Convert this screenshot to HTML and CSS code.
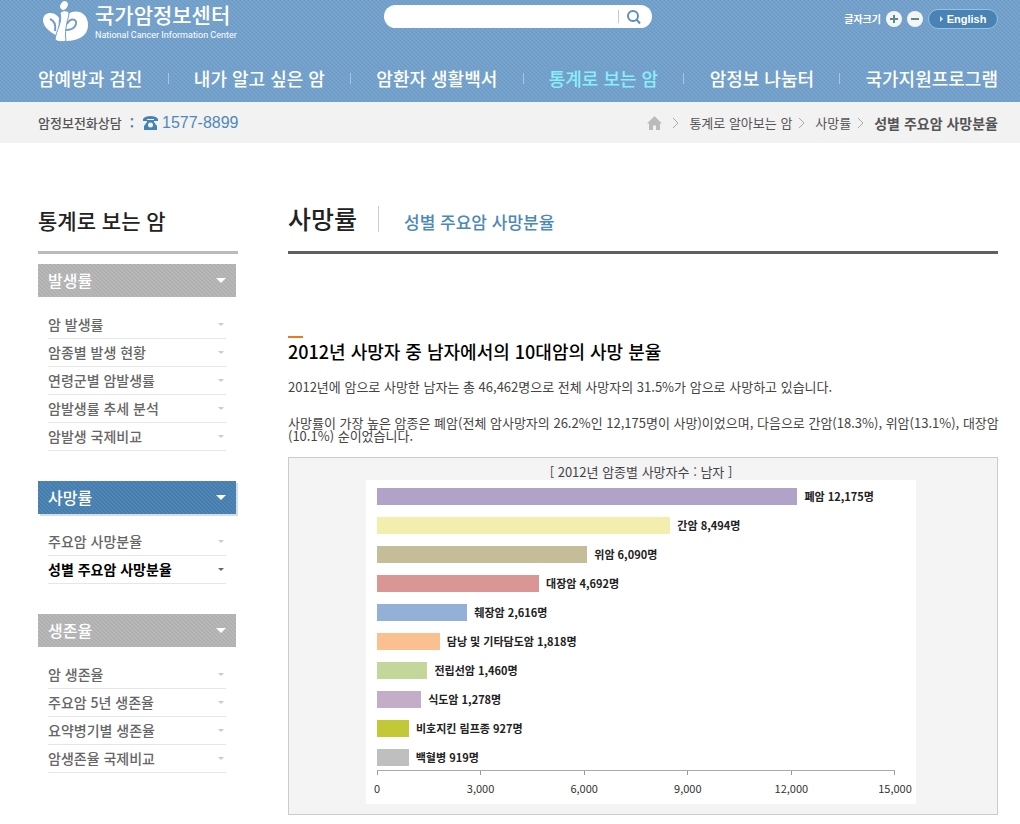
FILE: index.html
```html
<!DOCTYPE html>
<html lang="ko">
<head>
<meta charset="utf-8">
<meta name="viewport" content="width=device-width, initial-scale=1">
<title>국가암정보센터 - 성별 주요암 사망분율</title>
<link rel="stylesheet" href="styles.css">
</head>
<body>
<header class="header">
  <div class="topbar">
    <a class="logo" href="#">
      <svg class="logo-mark" viewBox="0 0 46 42" aria-hidden="true">
        <path d="M15 36C6 32 0 26 0 20C0 12 11 10 16 18Z"/>
        <path d="M24 15C32 8 45 12 45 25C45 36 35 41 22 41Z"/>
        <path class="logo-cut" d="M12 31C13 25 12 21 7 19"/>
        <path class="logo-cut" d="M24 24C27 18 34 18 33 24C32 28 28 30 23 30"/>
        <path class="logo-body" d="M17 13C19 10 25 10 26 13C26 18 21 27 23 41C20 42 15 42 12 40C13 30 20 22 17 13Z"/>
        <ellipse cx="21" cy="5.500" rx="3.500" ry="4.500" transform="rotate(30 21 5.500)"/>
      </svg>
      <span class="logo-text"><strong class="logo-ko">국가암정보센터</strong><span class="logo-en">National Cancer Information Center</span></span>
    </a>
    <form class="search" role="search">
      <input class="search-input" type="text" aria-label="검색어">
      <button class="search-button" type="button" aria-label="검색">
        <svg class="search-icon" viewBox="0 0 16 16" aria-hidden="true"><circle cx="7" cy="7" r="5"/><path d="M10.500 10.500L14 14.500"/></svg>
      </button>
    </form>
    <div class="tools">
      <span class="tools-label">글자크기</span>
      <button class="round" type="button" aria-label="글자 크게"><svg class="round-icon" viewBox="0 0 10 10" aria-hidden="true"><path d="M1 5H9M5 1V9"/></svg></button>
      <button class="round" type="button" aria-label="글자 작게"><svg class="round-icon" viewBox="0 0 10 10" aria-hidden="true"><path d="M1 5H9"/></svg></button>
      <a class="english" href="#"><svg class="english-arrow" viewBox="0 0 3 6" aria-hidden="true"><path d="M0 0L3 3L0 6Z"/></svg>English</a>
    </div>
  </div>
  <nav class="nav" aria-label="주 메뉴">
    <a class="nav-link" href="#">암예방과 검진</a><span class="nav-line"></span>
    <a class="nav-link" href="#">내가 알고 싶은 암</a><span class="nav-line"></span>
    <a class="nav-link" href="#">암환자 생활백서</a><span class="nav-line"></span>
    <a class="nav-link nav-current" href="#">통계로 보는 암</a><span class="nav-line"></span>
    <a class="nav-link" href="#">암정보 나눔터</a><span class="nav-line"></span>
    <a class="nav-link" href="#">국가지원프로그램</a>
  </nav>
</header>

<div class="subbar">
  <div class="phone">
    <span class="phone-label">암정보전화상담</span><span class="phone-colon">:</span>
    <svg class="phone-icon" viewBox="0 0 15 14" aria-hidden="true">
      <path d="M0 5V3C2 -1 13 -1 15 3V5H11V3H4V5Z"/>
      <path fill-rule="evenodd" d="M4 4H11V6L14 10V14H1V10L4 6ZM7.500 6.500A2.500 2.500 0 1 0 7.500 11.500A2.500 2.500 0 1 0 7.500 6.500Z"/>
    </svg>
    <span class="phone-number">1577-8899</span>
  </div>
  <nav class="crumbs" aria-label="현재 위치">
    <a class="crumb" href="#" aria-label="홈"><svg class="home" viewBox="0 0 15 14" aria-hidden="true"><path d="M7.500 0L15 7.500H13V14H9V9.500H6V14H2V7.500H0Z"/></svg></a>
    <svg class="chevron" viewBox="0 0 7 12" aria-hidden="true"><path d="M1 1L6 6L1 11"/></svg>
    <a class="crumb" href="#">통계로 알아보는 암</a>
    <svg class="chevron" viewBox="0 0 7 12" aria-hidden="true"><path d="M1 1L6 6L1 11"/></svg>
    <a class="crumb" href="#">사망률</a>
    <svg class="chevron" viewBox="0 0 7 12" aria-hidden="true"><path d="M1 1L6 6L1 11"/></svg>
    <strong class="crumb crumb-current">성별 주요암 사망분율</strong>
  </nav>
</div>

<div class="page">
  <aside class="side">
    <h2 class="side-title">통계로 보는 암</h2>
    <section class="group">
      <h3 class="group-head"><a class="group-link" href="#">발생률</a></h3>
      <ul class="menu">
        <li><a class="menu-link" href="#">암 발생률</a></li>
        <li><a class="menu-link" href="#">암종별 발생 현황</a></li>
        <li><a class="menu-link" href="#">연령군별 암발생률</a></li>
        <li><a class="menu-link" href="#">암발생률 추세 분석</a></li>
        <li><a class="menu-link" href="#">암발생 국제비교</a></li>
      </ul>
    </section>
    <section class="group">
      <h3 class="group-head group-open"><a class="group-link" href="#">사망률</a></h3>
      <ul class="menu">
        <li><a class="menu-link" href="#">주요암 사망분율</a></li>
        <li><a class="menu-link menu-current" href="#">성별 주요암 사망분율</a></li>
      </ul>
    </section>
    <section class="group">
      <h3 class="group-head"><a class="group-link" href="#">생존율</a></h3>
      <ul class="menu">
        <li><a class="menu-link" href="#">암 생존율</a></li>
        <li><a class="menu-link" href="#">주요암 5년 생존율</a></li>
        <li><a class="menu-link" href="#">요약병기별 생존율</a></li>
        <li><a class="menu-link" href="#">암생존율 국제비교</a></li>
      </ul>
    </section>
  </aside>

  <main class="main">
    <div class="heading">
      <h1 class="heading-title">사망률</h1>
      <span class="heading-line"></span>
      <span class="heading-sub">성별 주요암 사망분율</span>
    </div>
    <h2 class="section-title">2012년 사망자 중 남자에서의 10대암의 사망 분율</h2>
    <p class="text">2012년에 암으로 사망한 남자는 총 46,462명으로 전체 사망자의 31.5%가 암으로 사망하고 있습니다.</p>
    <p class="text">사망률이 가장 높은 암종은 폐암(전체 암사망자의 26.2%인 12,175명이 사망)이었으며, 다음으로 간암(18.3%), 위암(13.1%), 대장암(10.1%) 순이었습니다.</p>
    <figure class="figure">
      <figcaption class="caption">[ 2012년 암종별 사망자수 : 남자 ]</figcaption>
      <div class="chart">
        <ul class="bars">
          <li class="row"><span class="bar lung" style="width:81.17%"></span><span class="label">폐암 12,175명</span></li>
          <li class="row"><span class="bar liver" style="width:56.63%"></span><span class="label">간암 8,494명</span></li>
          <li class="row"><span class="bar stomach" style="width:40.6%"></span><span class="label">위암 6,090명</span></li>
          <li class="row"><span class="bar colon" style="width:31.28%"></span><span class="label">대장암 4,692명</span></li>
          <li class="row"><span class="bar pancreas" style="width:17.44%"></span><span class="label">췌장암 2,616명</span></li>
          <li class="row"><span class="bar gallbladder" style="width:12.12%"></span><span class="label">담낭 및 기타담도암 1,818명</span></li>
          <li class="row"><span class="bar prostate" style="width:9.73%"></span><span class="label">전립선암 1,460명</span></li>
          <li class="row"><span class="bar esophagus" style="width:8.52%"></span><span class="label">식도암 1,278명</span></li>
          <li class="row"><span class="bar lymphoma" style="width:6.18%"></span><span class="label">비호지킨 림프종 927명</span></li>
          <li class="row"><span class="bar leukemia" style="width:6.13%"></span><span class="label">백혈병 919명</span></li>
        </ul>
        <ol class="axis">
          <li class="tick">0</li><li class="tick">3,000</li><li class="tick">6,000</li><li class="tick">9,000</li><li class="tick">12,000</li><li class="tick">15,000</li>
        </ol>
      </div>
    </figure>
  </main>
</div>
</body>
</html>
```
FILE: styles.css
```css
* { box-sizing: border-box; }
body {
  margin: 0;
  background: #fff;
  color: #444;
  font: 13px/20px "Noto Sans CJK KR", sans-serif;
}
a { color: inherit; text-decoration: none; }
h1, h2, h3, p, ul, ol, figure { margin: 0; padding: 0; }
ul, ol { list-style: none; }
button, input { margin: 0; padding: 0; border: 0; font: inherit; }
svg { display: block; flex: none; }

/* Header */
.header {
  padding: 0 22px 14px 38px;
  background: #6f9dc9 linear-gradient(45deg, #78a4cc 25%, transparent 25% 50%, #78a4cc 50% 75%, transparent 75%) 0 0 / 4px 4px;
  color: #fff;
}
.topbar {
  display: grid;
  grid-template-columns: 1fr 268px 1fr;
  align-items: start;
  min-height: 48px;
}
.logo { display: flex; gap: 6px; padding-left: 5px; }
.logo-mark { width: 46px; height: 42px; fill: #fff; }
.logo-cut { fill: none; stroke: #709ec9; stroke-width: 2; }
.logo-body { stroke: #709ec9; stroke-width: 1; }
.logo-text { display: flex; flex-direction: column; }
.logo-ko { font-size: 21px; line-height: 29px; font-weight: 500; }
.logo-en { font: 9px/13px Roboto, Arial, sans-serif; white-space: nowrap; }
.search {
  display: flex;
  align-items: center;
  height: 23px;
  margin-top: 5px;
  border-radius: 12px;
  background: #fff;
}
.search-input { flex: 1; min-width: 0; height: 17px; margin-left: 14px; background: none; outline-offset: 2px; }
.search-button { width: 34px; height: 13px; padding-left: 7px; border-left: 1px solid #bcccd8; background: none; display: flex; align-items: center; }
.search-icon { width: 16px; height: 16px; fill: none; stroke: #5f90b8; stroke-width: 2; }
.tools { display: flex; justify-content: flex-end; align-items: center; gap: 5px; padding-top: 9px; }
.tools-label { font-size: 10px; font-weight: 700; }
.round {
  display: flex;
  align-items: center;
  justify-content: center;
  width: 16px;
  height: 16px;
  border-radius: 50%;
  background: #f4f6f6;
}
.round-icon { width: 10px; height: 10px; fill: none; stroke: #5a8a8c; stroke-width: 2; }
.english {
  display: flex;
  align-items: center;
  justify-content: center;
  gap: 4px;
  width: 70px;
  height: 20px;
  border: 1px solid #8fc4ea;
  border-radius: 10px;
  background: #4a83b3;
  font: bold 11px/18px "Liberation Sans", Arial, sans-serif;
}
.english-arrow { width: 3px; height: 6px; fill: #cdeaff; }
.nav { display: flex; justify-content: space-between; align-items: center; margin-top: 20px; }
.nav-link { font-size: 18px; line-height: 20px; font-weight: 500; white-space: nowrap; }
.nav-current { color: #8beefb; }
.nav-line { width: 1px; height: 11px; background: #a4c6e2; }

/* Contact and location bar */
.subbar {
  display: flex;
  justify-content: space-between;
  align-items: center;
  min-height: 41px;
  padding: 0 22px 0 38px;
  background: #f2f2f2;
}
.phone { display: flex; align-items: center; color: #4f89b8; }
.phone-label { color: #555; font-weight: 500; }
.phone-colon { margin: 0 9px 0 8px; font-weight: 700; }
.phone-icon { width: 15px; height: 14px; fill: #4583b4; }
.phone-number { margin-left: 4px; font: 16px/20px "Liberation Sans", Arial, sans-serif; }
.crumbs { display: flex; align-items: center; color: #555; }
.crumb { white-space: nowrap; }
.crumb-current { font-size: 14px; }
.home { width: 15px; height: 14px; margin-right: 4px; fill: #bbb; }
.chevron { width: 7px; height: 12px; margin: 0 10px 0 6px; fill: none; stroke: #aaa; }

/* Page columns */
.page { display: flex; gap: 50px; padding: 61px 22px 9px 38px; }
.side { flex: none; width: 200px; }
.side-title {
  padding-bottom: 15px;
  border-bottom: 3px solid #bbb;
  color: #222;
  font-size: 21px;
  line-height: 32px;
  font-weight: 500;
}
.group { margin: 10px 2px 30px 0; }
.group + .group { margin-top: 0; }
.group-head {
  background: #b0b0b0 linear-gradient(45deg, #b8b8b8 25%, transparent 25% 50%, #b8b8b8 50% 75%, transparent 75%) 0 0 / 4px 4px;
  color: #fff;
  font-size: 16px;
  font-weight: 500;
}
.group-open {
  background: #467cae linear-gradient(45deg, #4f86b4 25%, transparent 25% 50%, #4f86b4 50% 75%, transparent 75%) 0 0 / 4px 4px;
  box-shadow: 2px 2px 0 #d3dde6;
}
.group-link, .menu-link { display: flex; justify-content: space-between; align-items: center; }
.group-link { padding: 0 10px; line-height: 33px; }
.group-link::after { content: ""; border: 5px solid transparent; border-top-color: #fff; border-bottom: 0; }
.menu { margin: 14px 10px 0; }
.menu-link { border-bottom: 1px solid #e6e6e6; color: #666; font-size: 14px; line-height: 27px; font-weight: 500; }
.menu-link::after { content: ""; margin-right: 2px; border: 3px solid transparent; border-top-color: #ccc; border-bottom: 0; }
.menu-current { color: #000; font-weight: 700; }
.menu-current::after { border-top-color: #666; }

/* Article */
.main { flex: 1; min-width: 0; }
.heading { display: flex; align-items: baseline; padding-bottom: 17px; border-bottom: 3px solid #606060; }
.heading-title { color: #222; font-size: 25px; line-height: 28px; font-weight: 500; }
.heading-line { align-self: center; width: 1px; height: 26px; margin: 0 25px 0 21px; background: #ccc; }
.heading-sub { color: #4c88b8; font-size: 17px; line-height: 24px; font-weight: 500; }
.section-title {
  margin: 82px 0 16px;
  color: #000;
  font-size: 18px;
  line-height: 26px;
  font-weight: 500;
}
.section-title::before { content: ""; display: block; width: 15px; height: 2px; background: #e8791e; }
.text { margin: 0 -4px 23px 0; line-height: 13px; }
.text + .text { margin-bottom: 15px; }
.figure { padding: 6px 12px 10px 8px; border: 1px solid #ccc; background: #f4f4f4; }
.caption { text-align: center; line-height: 16px; }
.chart { max-width: 550px; margin: 0 auto; padding: 8px 21px 7px 11px; background: #fff; }
.bars { display: flex; flex-direction: column; gap: 12px; padding-bottom: 4px; border-bottom: 1px solid #aaa; }
.row { display: flex; align-items: center; gap: 7px; }
.bar { flex: none; height: 17px; }
.label { color: #222; font-size: 11px; line-height: 17px; font-weight: 700; white-space: nowrap; }
.lung { background: #b1a2c7; }
.liver { background: #f3edae; }
.stomach { background: #c4bd97; }
.colon { background: #d99694; }
.pancreas { background: #93b1d8; }
.gallbladder { background: #fac090; }
.prostate { background: #c3d79b; }
.esophagus { background: #c4adc9; }
.lymphoma { background: #c3c836; }
.leukemia { background: #bfbfbf; }
.axis { display: flex; justify-content: space-between; }
.tick { display: flex; flex-direction: column; align-items: center; width: 0; color: #333; font-size: 11px; line-height: 18px; white-space: nowrap; }
.tick::before { content: ""; width: 1px; height: 4px; margin-bottom: 4px; background: #999; }
```
